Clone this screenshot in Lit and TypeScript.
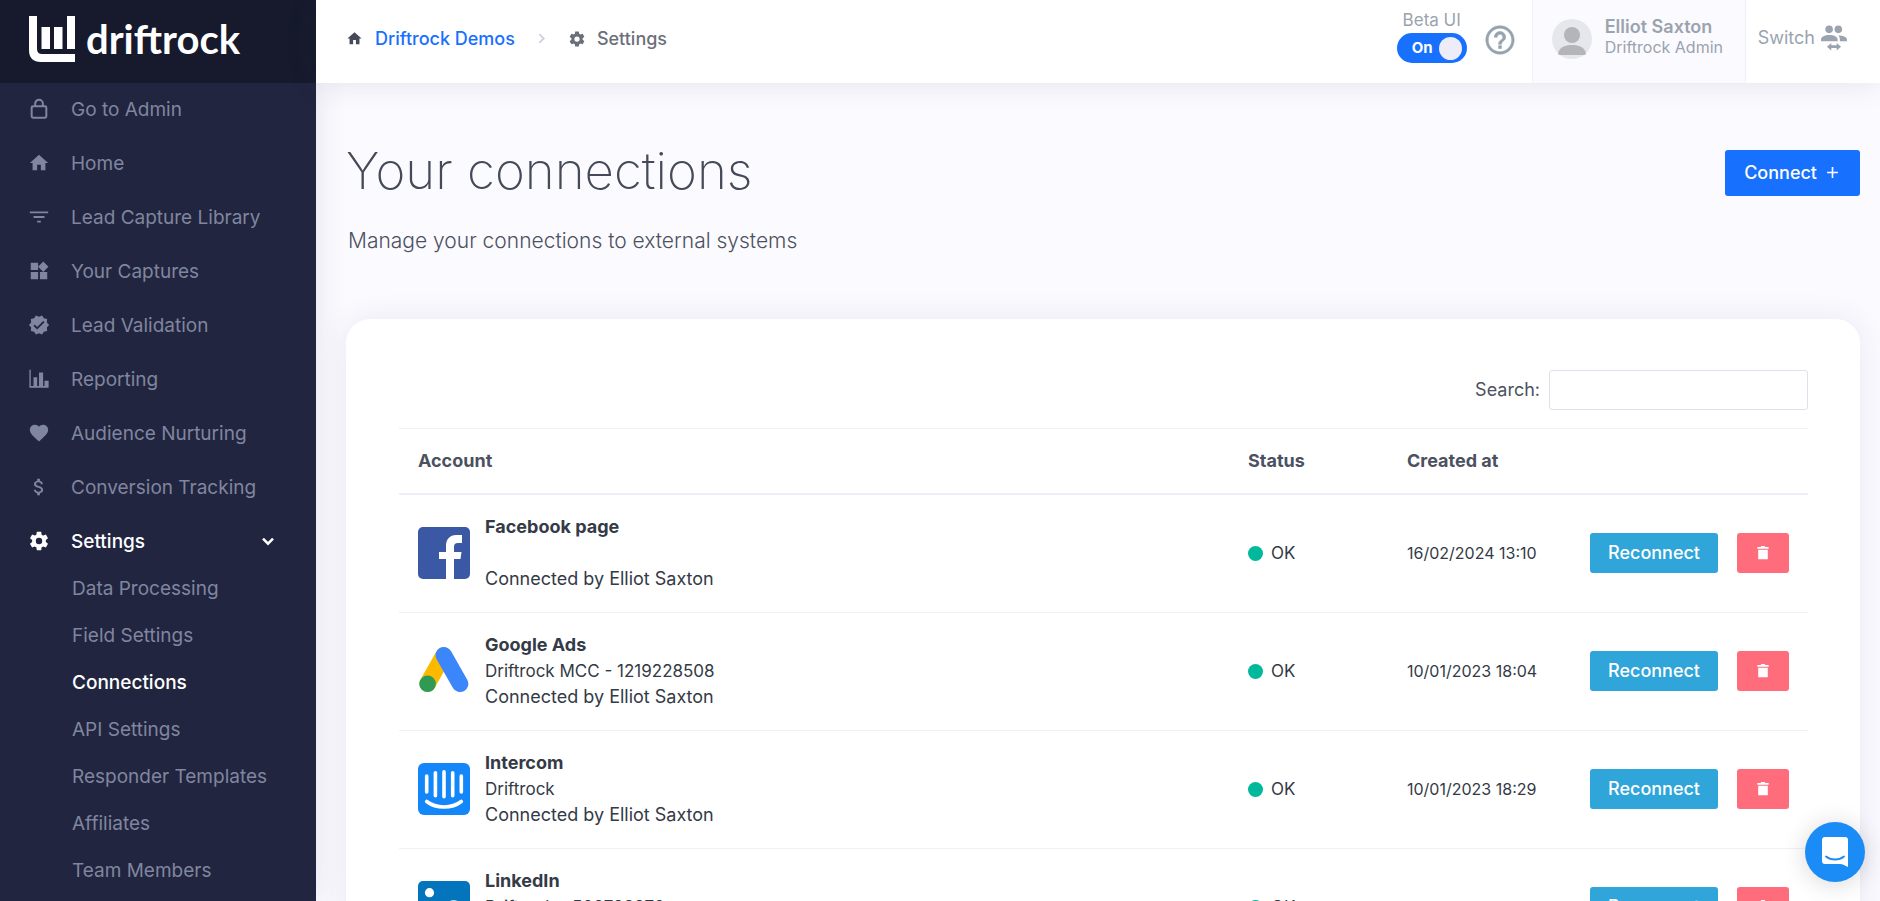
import { LitElement, html, css, svg, nothing, type TemplateResult } from "lit";
import { customElement, property } from "lit/decorators.js";
import { classMap } from "lit/directives/class-map.js";

const GLYPHS: Record<string, TemplateResult> = {
  lock: svg`<rect x="4" y="9" width="16" height="12.5" rx="1.5" fill="none" stroke="currentColor" stroke-width="2.2"/><path d="M7.8 9V6.2a4.2 4.2 0 0 1 8.4 0V9" fill="none" stroke="currentColor" stroke-width="2.2"/>`,
  home: svg`<path d="M10 20v-6h4v6h5v-8h3L12 3 2 12h3v8z"/>`,
  filter: svg`<path d="M10 18h4v-2h-4v2zM2 6v2h20V6H2zm4 7h12v-2H6v2z"/>`,
  widgets: svg`<path d="M13 13v8h8v-8h-8zM3 21h8v-8H3v8zM3 3v8h8V3H3zm13.66-1.31L11 7.34 16.66 13l5.66-5.66-5.66-5.65z"/>`,
  verified: svg`<path d="M23,12L20.56,9.22L20.9,5.54L17.29,4.72L15.4,1.54L12,3L8.6,1.54L6.71,4.72L3.1,5.53L3.44,9.21L1,12L3.44,14.78L3.1,18.47L6.71,19.29L8.6,22.47L12,21L15.4,22.46L17.29,19.28L20.9,18.46L20.56,14.78L23,12M10,17L6,13L7.41,11.59L10,14.17L16.59,7.58L18,9L10,17Z"/>`,
  chart: svg`<path d="M22.500,21.500H1.500V2H3V19.500H6V10H10V19.500H12V5H16.500V19.500H18V14H22.500Z"/>`,
  heart: svg`<path d="M12 21.350l-1.450-1.320C5.400 15.360 2 12.280 2 8.500 2 5.420 4.420 3 7.500 3c1.740 0 3.410.81 4.500 2.090C13.090 3.810 14.760 3 16.500 3 19.580 3 22 5.420 22 8.500c0 3.780-3.400 6.860-8.550 11.540L12 21.350z"/>`,
  dollar: svg`<path d="M11.800 10.900c-2.270-.59-3-1.200-3-2.150 0-1.090 1.010-1.850 2.700-1.850 1.780 0 2.440.85 2.500 2.100h2.210c-.07-1.720-1.120-3.300-3.210-3.810V3h-3v2.160c-1.940.42-3.500 1.680-3.500 3.610 0 2.310 1.910 3.460 4.700 4.130 2.500.6 3 1.480 3 2.410 0 .69-.49 1.790-2.700 1.790-2.060 0-2.870-.92-2.980-2.100h-2.200c.12 2.190 1.760 3.420 3.680 3.830V21h3v-2.150c1.950-.37 3.500-1.500 3.500-3.550 0-2.840-2.430-3.810-4.700-4.400z"/>`,
  cog: svg`<path d="M12,15.5A3.5,3.5 0 0,1 8.5,12A3.5,3.5 0 0,1 12,8.5A3.5,3.5 0 0,1 15.5,12A3.5,3.5 0 0,1 12,15.5M19.43,12.97C19.47,12.65 19.5,12.33 19.5,12C19.5,11.67 19.47,11.34 19.43,11L21.54,9.37C21.73,9.22 21.78,8.95 21.66,8.73L19.66,5.27C19.54,5.05 19.27,4.96 19.05,5.05L16.56,6.05C16.04,5.66 15.5,5.32 14.87,5.07L14.5,2.42C14.46,2.18 14.25,2 14,2H10C9.75,2 9.54,2.18 9.5,2.42L9.13,5.07C8.5,5.32 7.96,5.66 7.44,6.05L4.95,5.05C4.73,4.96 4.46,5.05 4.34,5.27L2.34,8.73C2.21,8.95 2.27,9.22 2.46,9.37L4.57,11C4.53,11.34 4.5,11.67 4.5,12C4.5,12.33 4.53,12.65 4.57,12.97L2.46,14.63C2.27,14.78 2.21,15.05 2.34,15.27L4.34,18.73C4.46,18.95 4.73,19.03 4.95,18.95L7.44,17.94C7.96,18.34 8.5,18.68 9.13,18.93L9.5,21.58C9.54,21.82 9.75,22 10,22H14C14.25,22 14.46,21.82 14.5,21.58L14.87,18.93C15.5,18.67 16.04,18.34 16.56,17.94L19.05,18.95C19.27,19.03 19.54,18.95 19.66,18.73L21.66,15.27C21.78,15.05 21.73,14.78 21.54,14.63L19.43,12.97Z"/>`,
  chevronDown: svg`<path d="M4.500 8.500l7.500 7.500 7.500-7.500" fill="none" stroke="currentColor" stroke-width="3.800"/>`,
  chevronRight: svg`<path d="M8.500 5l7 7-7 7" fill="none" stroke="currentColor" stroke-width="3"/>`,
  help: svg`<path d="M11 18h2v-2h-2v2zm1-16C6.480 2 2 6.480 2 12s4.480 10 10 10 10-4.480 10-10S17.520 2 12 2zm0 18.300c-4.600 0-8.300-3.700-8.300-8.300s3.700-8.300 8.300-8.300 8.300 3.700 8.300 8.300-3.700 8.300-8.300 8.300zm0-14.300c-2.210 0-4 1.790-4 4h2c0-1.100.9-2 2-2s2 .9 2 2c0 2-3 1.750-3 5h2c0-2.250 3-2.500 3-5 0-2.210-1.790-4-4-4z" stroke="currentColor" stroke-width=".4"/>`,
  switchUser: svg`<circle cx="7.500" cy="4" r="3.500"/><circle cx="16" cy="4" r="3.500"/><path d="M0 15v-1.500C0 10.500 4.500 9.300 7.700 9.300s7.700 1.200 7.700 4.200V15zM16.200 9.400c3.200.2 7.800 1.400 7.800 4.100V15h-6.600v-1.500c0-1.800-.6-3-1.200-4.100zM5.500 20l4-3.500v2.300h5v-2.300l4 3.500-4 3.500v-2.300h-5v2.300z"/>`,
  plus: svg`<path d="M12 2v20M2 12h20" fill="none" stroke="currentColor" stroke-width="3"/>`,
  trash: svg`<path d="M4.800 7h14.400v14.500h-14.400zM3.500 3h5l1-1.500h5l1 1.500h5v2.800h-17z"/>`,
};

const icon = (name: string, size = 22) =>
  html`<svg class="icon" width=${size} height=${size} viewBox="0 0 24 24" fill="currentColor" aria-hidden="true">${GLYPHS[name]}</svg>`;

const LOGOS: Record<string, TemplateResult> = {
  facebook: svg`<rect width="52" height="52" rx="5" fill="#3a58a4"/><path fill="#fff" d="M28 52V32h-7v-7h7v-6c0-7 4-11 10-11h6v8h-4c-3 0-4 1.500-4 4v5h7.500l-1 7H36v20z"/>`,
  google: svg`<g stroke-width="16.500" stroke-linecap="round"><path stroke="#fcb900" d="M25.500 10.500L9.700 38.500"/><path stroke="#3c86fb" d="M25.800 10.200l16.300 28.600"/></g><circle cx="9.600" cy="38.800" r="8.300" fill="#2f9a54"/>`,
  intercom: svg`<rect width="52" height="52" rx="6" fill="#1387f9"/><g fill="none" stroke="#fff" stroke-width="3.600" stroke-linecap="round"><path d="M8.700 13v16M17.400 9.800v23M26 8.800v25M34.700 9.800v23M43.300 13v16M8.700 38.500c9.500 7.300 25.100 7.300 34.600 0"/></g>`,
  linkedin: svg`<rect width="52" height="52" rx="5" fill="#0474bc"/><circle cx="11.500" cy="11.700" r="4.600" fill="#fff"/><path fill="#fff" d="M7.500 20h8v25h-8zM20.500 20h7.500v3.500c1.500-2.500 4-4.200 7.500-4.200 7.500 0 9.500 4.700 9.500 12V45h-8V33c0-4-.8-6.500-4-6.500s-4.500 2.500-4.500 6.500v12h-8z"/>`,
};

interface Connection {
  logo: string;
  name: string;
  account: string;
  owner: string;
  created: string;
}

const CONNECTIONS: Connection[] = [
  { logo: "facebook", name: "Facebook page", account: "", owner: "Elliot Saxton", created: "16/02/2024 13:10" },
  { logo: "google", name: "Google Ads", account: "Driftrock MCC - 1219228508", owner: "Elliot Saxton", created: "10/01/2023 18:04" },
  { logo: "intercom", name: "Intercom", account: "Driftrock", owner: "Elliot Saxton", created: "10/01/2023 18:29" },
  { logo: "linkedin", name: "LinkedIn", account: "Driftrock - 506783370", owner: "Elliot Saxton", created: "20/09/2022 12:44" },
];

const NAV: [string, string][] = [
  ["lock", "Go to Admin"],
  ["home", "Home"],
  ["filter", "Lead Capture Library"],
  ["widgets", "Your Captures"],
  ["verified", "Lead Validation"],
  ["chart", "Reporting"],
  ["heart", "Audience Nurturing"],
  ["dollar", "Conversion Tracking"],
  ["cog", "Settings"],
];

const SUBNAV = ["Data Processing", "Field Settings", "Connections", "API Settings", "Responder Templates", "Affiliates", "Team Members"];

const base = css`
  * { box-sizing: border-box; }
  a { color: inherit; text-decoration: none; }
  ul { list-style: none; margin: 0; padding: 0; }
  button { font: inherit; border: 0; cursor: pointer; }
  .icon { display: block; flex: none; }
`;

@customElement("side-nav")
class SideNav extends LitElement {
  @property() current = "Connections";

  static styles = [base, css`
    :host { display: block; background: #21253f; color: #80869f; font-size: 19px; overflow: hidden; }
    .brand { display: flex; align-items: center; gap: 11px; height: 83px; padding: 0 29px 5px; background: #161a2c; color: #fff; }
    .word { font: 700 40px/46px Lato, sans-serif; }
    .item { display: flex; align-items: center; height: 54px; padding: 0 28px 2px; }
    .item .label { flex: 1; margin-left: 21px; }
    .open { color: #fff; font-weight: 500; }
    .chevron { margin-right: 12px; }
    .sub { margin-top: -3px; }
    .subitem { display: flex; align-items: center; height: 47px; padding: 0 20px 2px 72px; }
    .active { color: #fff; font-weight: 500; }
  `];

  render() {
    return html`
      <a class="brand" href="#">
        <svg width="46" height="46" viewBox="0 0 46 46" fill="currentColor" aria-hidden="true">
          <path d="M0 0h8v33q0 5 5 5h33v8H12Q0 46 0 34zM12.500 11H21v22h-8.500zM25 11h8.500v22H25zM38 0h8v33h-8z"/>
        </svg>
        <span class="word">driftrock</span>
      </a>
      <nav aria-label="Main">
        <ul>
          ${NAV.map(([glyph, label]) => {
            const open = label === "Settings";
            return html`<li><a href="#" class=${classMap({ item: true, open })}>
              ${icon(glyph)}<span class="label">${label}</span>
              ${open ? html`<span class="chevron">${icon("chevronDown", 16)}</span>` : nothing}
            </a></li>`;
          })}
        </ul>
        <ul class="sub">
          ${SUBNAV.map((label) => html`<li><a href="#" class=${classMap({ subitem: true, active: label === this.current })}>${label}</a></li>`)}
        </ul>
      </nav>`;
  }
}

@customElement("top-bar")
class TopBar extends LitElement {
  static styles = [base, css`
    :host { display: flex; align-items: stretch; height: 83px; background: #fff; color: #9aa3ae; font-size: 18px; box-shadow: 0 0 30px rgba(60, 55, 100, .12); }
    .crumbs { display: flex; align-items: center; flex: 1; padding: 0 0 6px 30px; font-weight: 500; color: #6c6f7a; }
    .crumbs > .icon:first-child { color: #454a58; }
    .home { margin-left: 12px; color: #1870ff; }
    .sep { color: #cfd3df; margin: 0 19px; }
    .here { margin-left: 11px; }
    .beta { display: grid; justify-items: center; align-content: start; padding-top: 8px; font-size: 17px; line-height: 25px; }
    .pill { position: relative; display: block; height: 30px; }
    .pill input { appearance: none; display: flex; align-items: center; justify-content: flex-end; width: 70px; height: 30px; margin: 0; padding: 0 5px; border-radius: 15px; background: #1870ff; cursor: pointer; }
    .pill input::before { content: ""; width: 23px; height: 23px; border-radius: 50%; background: #ecedf8; }
    .on { position: absolute; left: 15px; top: 2px; color: #fff; font-size: 15px; font-weight: 700; }
    .help { display: flex; align-items: center; padding: 0 15px 3px 16px; background: none; color: #94a3af; }
    .user { display: flex; align-items: center; gap: 13px; width: 214px; padding: 0 0 6px 19px; border: 1px solid #f0f0f9; border-width: 0 1px; background: #fbfaff; }
    .who { display: grid; padding-bottom: 3px; line-height: 21px; }
    .name { font-weight: 600; }
    .role { font-size: 16px; }
    .switch { display: flex; align-items: center; gap: 6px; padding: 0 33px 8px 12px; }
  `];

  render() {
    return html`
      <nav class="crumbs" aria-label="Breadcrumb">
        ${icon("home", 17)}<a class="home" href="#">Driftrock Demos</a>
        <span class="sep">${icon("chevronRight", 15)}</span>
        ${icon("cog", 18)}<span class="here">Settings</span>
      </nav>
      <label class="beta">Beta UI
        <span class="pill"><input type="checkbox" checked /><span class="on">On</span></span>
      </label>
      <button class="help" aria-label="Help">${icon("help", 34)}</button>
      <a class="user" href="#">
        <svg width="40" height="40" viewBox="0 0 40 40" aria-hidden="true">
          <circle cx="20" cy="20" r="20" fill="#e6e7ec"/>
          <circle cx="20" cy="16" r="8" fill="#b3b5bb"/>
          <path d="M6 35c1-7 7-9 14-9s13 2 14 9q-1 1-2 1H8q-1 0-2-1z" fill="#b3b5bb"/>
        </svg>
        <span class="who"><span class="name">Elliot Saxton</span><span class="role">Driftrock Admin</span></span>
      </a>
      <a class="switch" href="#">Switch ${icon("switchUser", 26)}</a>`;
  }
}

@customElement("connections-table")
class ConnectionsTable extends LitElement {
  static styles = [base, css`
    :host { display: block; padding: 51px 52px 52px 53px; border-radius: 24px; background: #fff; box-shadow: 0 0 30px rgba(60, 55, 120, .09); font-size: 18px; line-height: 26px; color: #343a46; }
    .search { display: flex; justify-content: flex-end; align-items: center; gap: 9px; margin-bottom: 18px; color: #4b5160; }
    .search input { width: 259px; height: 40px; padding: 0 12px; border: 1px solid #dfe0ec; border-radius: 3px; background: #fff; font: inherit; }
    table { width: 100%; table-layout: fixed; border-collapse: separate; border-spacing: 0; }
    .c-status { width: 159px; }
    .c-created { width: 183px; }
    .c-actions { width: 237px; }
    th { padding: 19px; border-top: 1px solid #eff0f8; border-bottom: 2px solid #eceef8; text-align: left; font-weight: 700; color: #4b5160; }
    td { padding: 19px 19px 20px; border-bottom: 1px solid #eff0f8; }
    .account { display: flex; align-items: center; gap: 15px; }
    .text { display: grid; grid-auto-rows: 26px; }
    .name { font-weight: 700; }
    .ref { font-size: 17px; }
    .status { display: flex; align-items: center; gap: 8px; font-size: 17px; }
    .dot { width: 15px; height: 15px; border-radius: 50%; background: #00b89c; }
    .created { font-size: 16px; white-space: nowrap; }
    .actions { display: flex; gap: 19px; }
    .btn { display: flex; align-items: center; justify-content: center; height: 40px; padding: 0; border-radius: 3px; color: #fff; font-weight: 500; }
    .reconnect { width: 128px; background: #30a5da; }
    .remove { width: 52px; background: #ff6c7c; }
  `];

  render() {
    return html`
      <div class="search">
        <label for="q">Search:</label><input id="q" type="search" />
      </div>
      <table>
        <colgroup><col /><col class="c-status" /><col class="c-created" /><col class="c-actions" /></colgroup>
        <thead><tr><th>Account</th><th>Status</th><th>Created at</th><th></th></tr></thead>
        <tbody>
          ${CONNECTIONS.map((c) => html`<tr>
            <td><div class="account">
              <svg width="52" height="52" viewBox="0 0 52 52" aria-hidden="true">${LOGOS[c.logo]}</svg>
              <div class="text">
                <span class="name">${c.name}</span>
                <span class="ref">${c.account}</span>
                <span>Connected by ${c.owner}</span>
              </div>
            </div></td>
            <td><div class="status"><span class="dot"></span>OK</div></td>
            <td class="created">${c.created}</td>
            <td><div class="actions">
              <button class="btn reconnect">Reconnect</button>
              <button class="btn remove" aria-label="Delete ${c.name}">${icon("trash", 16)}</button>
            </div></td>
          </tr>`)}
        </tbody>
      </table>`;
  }
}

@customElement("app-root")
class AppRoot extends LitElement {
  static styles = [base, css`
    :host { display: grid; grid-template-columns: 316px minmax(0, 1fr); height: 100vh; overflow: hidden; background: #fbfaff; font-family: Inter, "Open Sans", sans-serif; color: #4b5160; }
    side-nav { box-shadow: 0 0 30px rgba(60, 55, 100, .12); }
    .page { display: flex; flex-direction: column; min-width: 0; min-height: 0; }
    top-bar { flex: none; }
    main { flex: 1; min-height: 0; overflow-y: auto; scrollbar-width: none; padding: 58px 20px 40px 30px; }
    .head { display: flex; justify-content: space-between; align-items: flex-start; }
    h1 { margin: 0; font-size: 51px; line-height: 60px; font-weight: 200; color: #454a58; }
    .lead { margin: 26px 0 64px 2px; font-size: 21px; line-height: 28px; font-weight: 300; }
    .connect { display: flex; align-items: center; gap: 9px; height: 46px; margin-top: 9px; padding: 0 21px 2px 19px; border-radius: 3px; background: #1870ff; color: #fff; font-size: 18px; font-weight: 500; }
    .chat { position: fixed; right: 15px; bottom: 19px; display: grid; place-items: center; width: 60px; height: 60px; border-radius: 50%; background: #1b8bf5; box-shadow: 0 2px 24px rgba(0, 0, 0, .16); }
  `];

  render() {
    return html`
      <side-nav></side-nav>
      <div class="page">
        <top-bar></top-bar>
        <main>
          <div class="head">
            <h1>Your connections</h1>
            <button class="connect">Connect ${icon("plus", 13)}</button>
          </div>
          <p class="lead">Manage your connections to external systems</p>
          <connections-table></connections-table>
        </main>
      </div>
      <button class="chat" aria-label="Open chat">
        <svg width="26" height="30" viewBox="0 0 26 30" aria-hidden="true">
          <path d="M3 0h20q3 0 3 3v27c-3-1.500-5-3-8-3H3q-3 0-3-3V3q0-3 3-3z" fill="#fff"/>
          <path d="M4 19.500c5 4 13 4 18 0" fill="none" stroke="#1b8bf5" stroke-width="1.800" stroke-linecap="round"/>
        </svg>
      </button>`;
  }
}
